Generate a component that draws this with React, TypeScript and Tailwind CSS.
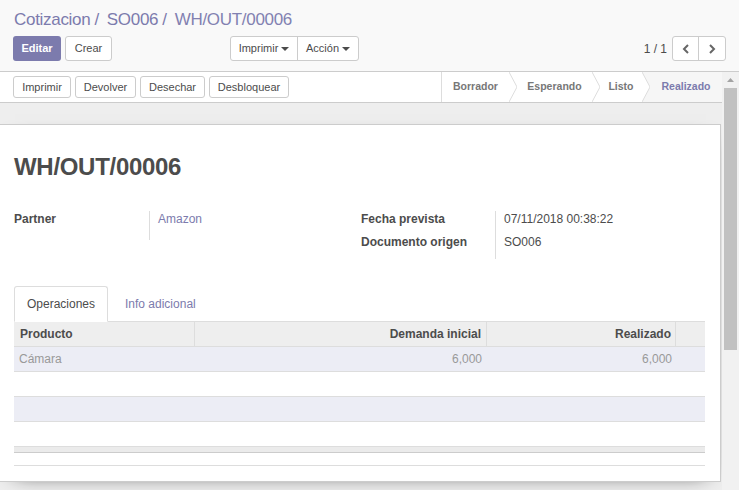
import React from 'react';

function Btn({ children, className = '' }: { children: React.ReactNode; className?: string }) {
  return (
    <button
      className={`h-[22px] border border-[#ccc] rounded-[3px] bg-white text-[11px] text-[#4c4c4c] leading-none ${className}`}
    >
      {children}
    </button>
  );
}

function Caret() {
  return (
    <svg width="8" height="4" viewBox="0 0 8 4" className="ml-[3px] inline-block">
      <polygon points="0,0 8,0 4,4" fill="#4c4c4c" />
    </svg>
  );
}

function Sep({ fill }: { fill?: string }) {
  return (
    <svg width="8" height="30" viewBox="0 0 8 30" className="shrink-0 block">
      {fill && <polygon points="0,0 8,0 8,30 0,30 8,15" fill={fill} />}
      <polyline points="0,0 8,15 0,30" fill="none" stroke="#ddd" strokeWidth="1" />
    </svg>
  );
}

const rows = [
  { product: 'Cámara', demand: '6,000', done: '6,000' },
  null,
  null,
  null,
];

export default function App() {
  return (
    <div className="w-[739px] h-[490px] overflow-hidden flex flex-col font-['Liberation_Sans',Arial,sans-serif] text-[12px] text-[#4c4c4c]">
      {/* control panel */}
      <div className="h-[72px] shrink-0 bg-[#f9f9f9] border-b border-[#ccc] px-[13px] pt-[9px]">
        <div className="text-[17px] leading-[22px] tracking-[-0.3px] text-[#7c7bad] pl-px">
          <span>Cotizacion</span>
          <span className="ml-[4px] mr-[8px]">/</span>
          <span>SO006</span>
          <span className="ml-[4px] mr-[8px]">/</span>
          <span className="text-[#8281b1]">WH/OUT/00006</span>
        </div>
        <div className="mt-[5px] flex items-center h-[25px]">
          <div className="flex gap-[4px] w-[217px]">
            <button className="h-[25px] w-[48px] rounded-[3px] bg-[#7c7bad] text-white text-[11px] font-bold">Editar</button>
            <button className="h-[25px] w-[47px] rounded-[3px] bg-white border border-[#ccc] text-[11px]">Crear</button>
          </div>
          <div className="flex h-[25px] border border-[#ccc] rounded-[3px] bg-white text-[11px]">
            <button className="w-[67px] flex items-center justify-center border-r border-[#ccc]">
              Imprimir<Caret />
            </button>
            <button className="w-[60px] flex items-center justify-center">
              Acción<Caret />
            </button>
          </div>
          <div className="ml-auto flex items-center">
            <span className="mr-[5px] text-[12px]">1 / 1</span>
            <div className="flex h-[25px] border border-[#ccc] rounded-[3px] bg-white">
              <button className="w-[26px] flex items-center justify-center border-r border-[#ccc]">
                <svg width="8" height="10" viewBox="0 0 8 10">
                  <polyline points="6,1 2,5 6,9" fill="none" stroke="#666" strokeWidth="2" />
                </svg>
              </button>
              <button className="w-[26px] flex items-center justify-center">
                <svg width="8" height="10" viewBox="0 0 8 10">
                  <polyline points="2,1 6,5 2,9" fill="none" stroke="#666" strokeWidth="2" />
                </svg>
              </button>
            </div>
          </div>
        </div>
      </div>

      <div className="flex-1 flex min-h-0">
        <div className="w-[722px] flex flex-col bg-[#eeeeee]">
          {/* statusbar */}
          <div className="h-[31px] shrink-0 bg-white border-b border-[#ccc] flex items-center justify-between pl-[13px]">
            <div className="flex gap-[4px]">
              <Btn className="w-[58px]">Imprimir</Btn>
              <Btn className="w-[61px]">Devolver</Btn>
              <Btn className="w-[65px]">Desechar</Btn>
              <Btn className="w-[80px]">Desbloquear</Btn>
            </div>
            <div className="flex h-[30px] border-l border-[#ddd] text-[10.5px] font-bold text-[#777]">
              <div className="w-[67px] flex items-center justify-center">Borrador</div>
              <Sep />
              <div className="w-[75px] flex items-center justify-center">Esperando</div>
              <Sep />
              <div className="w-[42px] flex items-center justify-center">Listo</div>
              <Sep fill="#f6f6f6" />
              <div className="w-[72px] flex items-center justify-center bg-[#f6f6f6] text-[#7c7bad]">Realizado</div>
            </div>
          </div>

          {/* sheet */}
          <div className="pt-[21px] pr-px">
            <div className="bg-white border border-l-0 border-[#ccc] shadow-[0_5px_20px_-15px_black] h-[358px] pl-[14px] pr-[15px] pt-[29px]">
              <h1 className="text-[24px] leading-[26px] tracking-[-0.3px] font-bold text-[#4c4c4c]">WH/OUT/00006</h1>

              <div className="mt-[30px] flex">
                <div className="w-[347px] flex">
                  <div className="w-[135px] font-bold leading-[18px]">Partner</div>
                  <div className="h-[29px] border-l border-[#ddd] pl-[8px] leading-[18px] text-[#7c7bad] mt-px">
                    <div className="-mt-px">Amazon</div>
                  </div>
                </div>
                <div className="flex">
                  <div className="w-[134px] font-bold leading-[18px]">
                    <div className="h-[23px]">Fecha prevista</div>
                    <div className="h-[23px]">Documento origen</div>
                  </div>
                  <div className="h-[48px] border-l border-[#ddd] pl-[8px] leading-[18px] mt-px">
                    <div className="h-[23px] -mt-px">07/11/2018 00:38:22</div>
                    <div className="h-[23px]">SO006</div>
                  </div>
                </div>
              </div>

              {/* tabs */}
              <div className="mt-[27px] flex border-b border-[#ddd] h-[36px]">
                <div className="w-[94px] h-[36px] border border-[#ddd] border-b-white rounded-t-[3px] bg-white flex items-center justify-center">
                  Operaciones
                </div>
                <div className="ml-[2px] px-[15px] flex items-center text-[#7c7bad]">Info adicional</div>
              </div>

              {/* table */}
              <div className="grid grid-cols-[181px_292px_189px_30px] h-[25px] bg-[#eeeeee] border-b border-[#ddd] font-bold items-stretch">
                <div className="border-r border-[#ddd] pl-[6px] flex items-center">Producto</div>
                <div className="border-r border-[#ddd] pr-[5px] flex items-center justify-end">Demanda inicial</div>
                <div className="border-r border-[#ddd] pr-[4px] flex items-center justify-end">Realizado</div>
                <div />
              </div>
              {rows.map((r, i) => (
                <div
                  key={i}
                  className={`grid grid-cols-[181px_292px_189px_30px] h-[25px] border-b border-[#ddd] text-[#999] ${i % 2 === 0 ? 'bg-[#ecedf5]' : 'bg-white'}`}
                >
                  <div className="pl-[5px] flex items-center">{r?.product}</div>
                  <div className="pr-[5px] flex items-center justify-end">{r?.demand}</div>
                  <div className="pr-[4px] flex items-center justify-end">{r?.done}</div>
                  <div />
                </div>
              ))}
              <div className="h-[6px] bg-[#ebebeb] border-b border-[#ccc]" />
              <div className="h-[13px] border-b border-[#ddd]" />
            </div>
          </div>
        </div>

        {/* scrollbar */}
        <div className="w-[17px] bg-[#f1f1f1] flex flex-col items-center">
          <svg width="17" height="16" viewBox="0 0 17 16" className="block shrink-0">
            <polygon points="5,10 12,10 8.5,6" fill="#a3a3a3" />
          </svg>
          <div className="w-[13px] h-[262px] bg-[#c1c1c1]" />
        </div>
      </div>
    </div>
  );
}
